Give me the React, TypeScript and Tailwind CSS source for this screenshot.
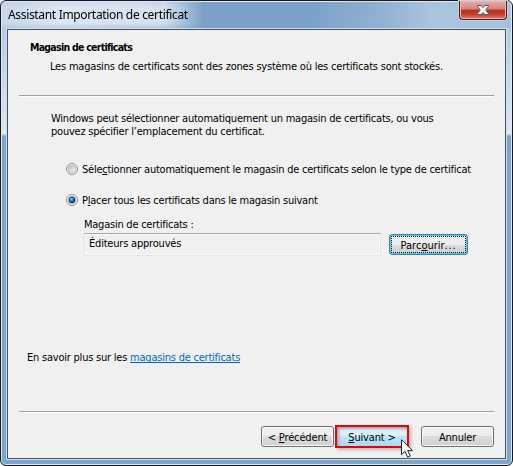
import React from 'react';

function Radio({ checked }: { checked?: boolean }) {
  return (
    <svg width="12" height="12" viewBox="0 0 12 12" className="shrink-0">
      <defs>
        <linearGradient id="ring" x1="0" y1="0" x2="1" y2="1">
          <stop offset="0" stopColor="#b7bcc1" />
          <stop offset="1" stopColor="#f5f6f7" />
        </linearGradient>
        <radialGradient id="dot" cx=".4" cy=".35" r=".65">
          <stop offset="0" stopColor="#8ee0fa" />
          <stop offset=".45" stopColor="#1983b5" />
          <stop offset="1" stopColor="#0b3053" />
        </radialGradient>
      </defs>
      <circle cx="6" cy="6" r="5.5" fill="#f4f4f4" stroke="#8e8f8f" />
      <circle cx="6" cy="6" r="3.8" fill="url(#ring)" stroke="#b4b9be" strokeWidth=".8" />
      {checked && <circle cx="6" cy="6" r="3" fill="url(#dot)" stroke="#173d60" strokeWidth=".8" />}
    </svg>
  );
}

function Divider() {
  return <div className="ml-[11px] h-[2px] w-[475px] shrink-0 border-b border-white bg-[#a0a0a0]" />;
}

function Key({ children }: { children: string }) {
  return <span className="underline decoration-1 underline-offset-[1px] [text-decoration-skip-ink:none]">{children}</span>;
}

const face = 'flex shrink-0 items-center justify-center rounded-[3px] border whitespace-nowrap';
const plain = 'pt-[2px] border-[#707070] bg-[linear-gradient(#f2f2f2_0,#ebebeb_50%,#dddddd_50%,#cfcfcf_100%)] shadow-[inset_0_0_0_1px_#f8f8f8]';

export default function App() {
  return (
    <div className="h-[466px] w-[513px] overflow-hidden bg-white font-['DejaVu_Sans_Condensed','DejaVu_Sans',sans-serif] text-[11px] leading-[13px] text-black [font-stretch:condensed]">
      <div className="relative flex h-full w-full flex-col rounded-[6px] border border-[#15181f] bg-[linear-gradient(#c5d7ea_0,#b6cbe2_30px,#dfe8f2_133px,#7fa4ca_135px,#7fa4ca_100%)] shadow-[inset_0_0_0_1px_#dceaf5]">
        <div className="m-px mb-0 flex h-[26px] shrink-0 items-start justify-between rounded-t-[5px] bg-[linear-gradient(100deg,#9db9d7_0,#7ca1c8_38%,#7ca1c8_61%,#93b2d3_75%,#abc4dd_84%,#a9c2dc_100%)]">
          <div className="h-[26px] w-[202px] rounded-tl-[5px] bg-[linear-gradient(90deg,#d3e0edcc_0,#dde7f2_30%,#d5e1ee_80%,#d5e1ee00_100%)] pt-[5px] pl-[6px] font-['Noto_Sans',sans-serif] text-[12px] leading-[16px] tracking-[-0.33px] whitespace-nowrap [mask-image:linear-gradient(#000c_0,#000_22%,#000_80%,#0009_100%)]">
            Assistant Importation de certificat
          </div>
          <div className="mt-[-1px] mr-[4px] flex h-[19px] w-[48px] items-start justify-center rounded-b-[4px] border border-t-0 border-[#4b1b25] bg-[linear-gradient(#e9aaa4_0,#d98480_45%,#b9301f_50%,#bd3b29_72%,#e27b63_100%)] pt-[3px] shadow-[inset_0_0_0_1px_#efb5ac,0_0_0_1px_#c1d2e3]">
            <svg width="12" height="12" viewBox="0 0 12 12">
              <path d="M.5 1.5h3.7L6 3.6l1.8-2.1h3.7v1L8.7 6l2.8 3.5v1H7.8L6 8.4l-1.8 2.1H.5v-1L3.3 6 .5 2.5z" fill="#fff" stroke="#535666" />
            </svg>
          </div>
        </div>
        <div className="mx-[5px] mt-0 mb-[5px] flex min-h-0 flex-1 flex-col border border-[#cfe0ed]">
          <div className="flex min-h-0 flex-1 flex-col border border-[#46535f] bg-[#f0f0f0]">
            <div className="h-[65px] shrink-0 pt-[11px] whitespace-nowrap">
              <div className="ml-[22px] text-[10.5px] font-bold tracking-[-0.73px]">Magasin de certificats</div>
              <div className="mt-[6px] ml-[42px] tracking-[-0.2px]">Les magasins de certificats sont des zones système où les certificats sont stockés.</div>
            </div>
            <Divider />
            <div className="flex flex-1 flex-col pt-[15px] whitespace-nowrap">
              <div className="ml-[43px] tracking-[-0.23px]">
                <div>Windows peut sélectionner automatiquement un magasin de certificats, ou vous</div>
                <div>pouvez spécifier l’emplacement du certificat.</div>
              </div>
              <div className="mt-[25px] ml-[58px] flex h-[13px] items-start gap-[4px]">
                <Radio />
                <span className="tracking-[-0.24px]">Séle<Key>c</Key>tionner automatiquement le magasin de certificats selon le type de certificat</span>
              </div>
              <div className="mt-[18px] ml-[58px] flex h-[13px] items-start gap-[4px]">
                <Radio checked />
                <span className="tracking-[-0.24px]">P<Key>l</Key>acer tous les certificats dans le magasin suivant</span>
              </div>
              <div className="mt-[11px] ml-[76px] tracking-[-0.24px]">Magasin de certificats :</div>
              <div className="mt-[2px] ml-[76px] flex items-start gap-[8px]">
                <div className="h-[23px] w-[297px] border border-[#e3e3e8] border-t-[#a5a8b0] pt-[3px] pl-[4px] tracking-[-0.2px] shadow-[inset_0_0_0_1px_#fafafa]">Éditeurs approuvés</div>
                <div className={`${face} mt-px h-[21px] w-[79px] border-[#3c7fb1] bg-[linear-gradient(#f2f2f2_0,#ebebeb_50%,#dddddd_50%,#cfcfcf_100%)] shadow-[inset_0_0_0_1px_#48d0f3]`}>
                  <div className="flex h-[17px] w-[75px] items-center justify-center border border-dotted border-black pt-[2px]">
                    <span>Parc<Key>o</Key>urir<span className="tracking-[0.8px]">...</span></span>
                  </div>
                </div>
              </div>
              <div className="mt-[95px] ml-[19px] tracking-[-0.22px]">
                En savoir plus sur les <span className="text-[#0066cc] underline [text-decoration-skip-ink:none]">magasins de certificats</span>
              </div>
            </div>
            <Divider />
            <div className="flex h-[45px] shrink-0 items-start justify-end pt-[12px] pr-[11px]">
              <div className={`${face} ${plain} mt-px h-[21px] w-[73px] tracking-[-0.15px]`}><span>&lt; <Key>P</Key>récédent</span></div>
              <div className="relative ml-px flex h-[23px] w-[74px] items-center justify-center border-2 border-[#f00000] bg-[linear-gradient(#e4f1f9_0,#d9effb_50%,#bee6fd_50%,#a7d9f5_100%)] pt-[2px] tracking-[-0.15px] whitespace-nowrap shadow-[inset_2px_2px_3px_#98aab5,2px_2px_3px_#8888]">
                <span><Key>S</Key>uivant &gt;</span>
                <svg className="absolute top-[12px] left-[64px]" width="13" height="20" viewBox="0 0 13 20">
                  <path d="M.5.7v15l3.5-3.4 2.7 5.9 2.7-1.2-2.7-5.4h4.8z" fill="#fff" stroke="#202435" />
                </svg>
              </div>
              <div className={`${face} ${plain} mt-px ml-[12px] h-[21px] w-[73px] tracking-[-0.2px]`}>Annuler</div>
            </div>
          </div>
        </div>
      </div>
    </div>
  );
}
